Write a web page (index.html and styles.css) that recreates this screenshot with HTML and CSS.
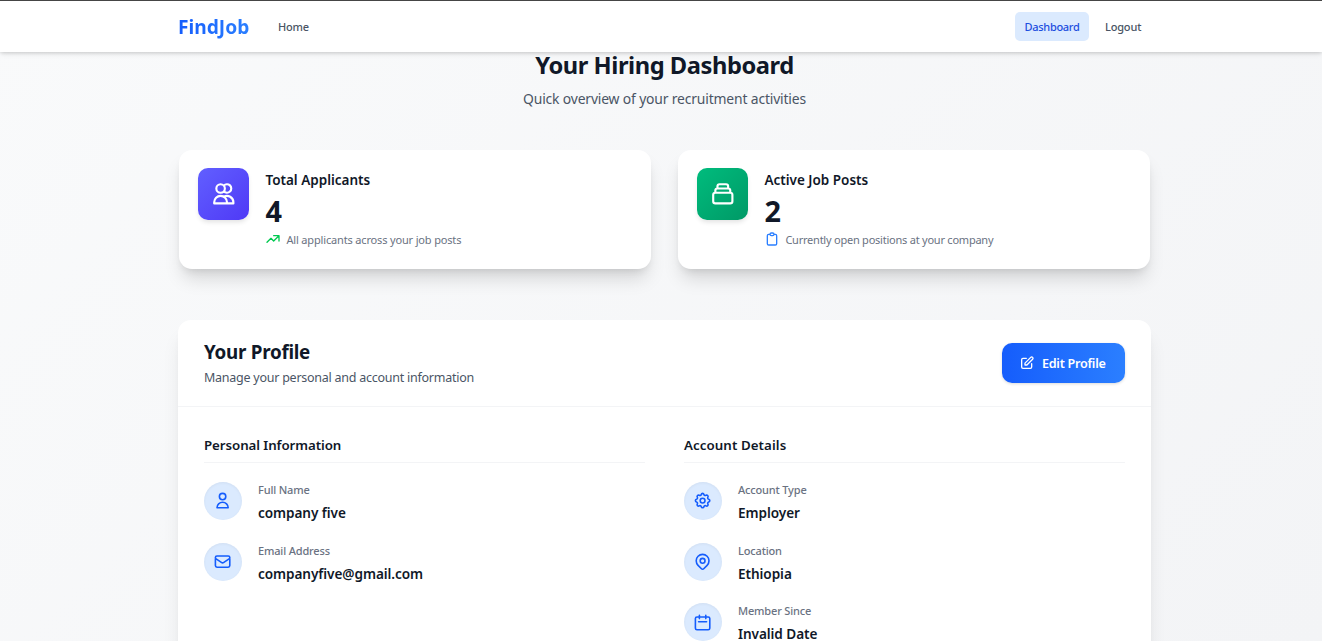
FILE: index.html
```html
<!DOCTYPE html>
<html lang="en">
<head>
<meta charset="utf-8">
<title>FindJob</title>
<link rel="stylesheet" href="styles.css">
</head>
<body>
<header class="nav">
  <div class="nav-inner">
    <a class="brand">FindJob</a>
    <a class="nav-link home">Home</a>
    <span class="grow"></span>
    <a class="nav-link active">Dashboard</a>
    <a class="nav-link logout">Logout</a>
  </div>
</header>
<main class="page">
  <div class="intro">
    <h1 class="title">Your Hiring Dashboard</h1>
    <p class="subtitle">Quick overview of your recruitment activities</p>
  </div>
  <section class="stats">
    <article class="stat">
      <div class="tile indigo"><svg class="icon-lg" viewBox="0 0 24 24"><path d="M12 4.354a4 4 0 110 5.292M15 21H3v-1a6 6 0 0112 0v1zm0 0h6v-1a6 6 0 00-9-5.197M13 7a4 4 0 11-8 0 4 4 0 018 0z"/></svg></div>
      <div class="stat-body">
        <h2 class="stat-name">Total Applicants</h2>
        <p class="stat-value">4</p>
        <p class="stat-note"><svg class="icon-sm green" viewBox="0 0 24 24"><path d="M13 7h8m0 0v8m0-8l-8 8-4-4-6 6"/></svg><span>All applicants across your job posts</span></p>
      </div>
    </article>
    <article class="stat">
      <div class="tile emerald"><svg class="icon-lg" viewBox="0 0 24 24"><path d="M19 11H5m14 0a2 2 0 012 2v6a2 2 0 01-2 2H5a2 2 0 01-2-2v-6a2 2 0 012-2m14 0V9a2 2 0 00-2-2M5 11V9a2 2 0 012-2m0 0V5a2 2 0 012-2h6a2 2 0 012 2v2M7 7h10"/></svg></div>
      <div class="stat-body">
        <h2 class="stat-name">Active Job Posts</h2>
        <p class="stat-value">2</p>
        <p class="stat-note tight"><svg class="icon-sm blue" viewBox="0 0 24 24"><path d="M9 5H7a2 2 0 00-2 2v12a2 2 0 002 2h10a2 2 0 002-2V7a2 2 0 00-2-2h-2M9 5a2 2 0 002 2h2a2 2 0 002-2M9 5a2 2 0 012-2h2a2 2 0 012 2"/></svg><span>Currently open positions at your company</span></p>
      </div>
    </article>
  </section>
  <section class="profile">
    <div class="profile-head">
      <div>
        <h2 class="profile-title">Your Profile</h2>
        <p class="profile-sub">Manage your personal and account information</p>
      </div>
      <button class="edit"><svg class="icon-sm" viewBox="0 0 24 24"><path d="M11 5H6a2 2 0 00-2 2v11a2 2 0 002 2h11a2 2 0 002-2v-5m-1.414-9.414a2 2 0 112.828 2.828L11.828 15H9v-2.828l8.586-8.586z"/></svg><span>Edit Profile</span></button>
    </div>
    <div class="columns">
      <div class="column">
        <h3 class="col-title">Personal Information</h3>
        <div class="field">
          <div class="dot"><svg class="icon-md" viewBox="0 0 24 24"><path d="M16 7a4 4 0 11-8 0 4 4 0 018 0zM12 14a7 7 0 00-7 7h14a7 7 0 00-7-7z"/></svg></div>
          <div><p class="label">Full Name</p><p class="value">company five</p></div>
        </div>
        <div class="field">
          <div class="dot"><svg class="icon-md" viewBox="0 0 24 24"><path d="M3 8l7.89 5.26a2 2 0 002.22 0L21 8M5 19h14a2 2 0 002-2V7a2 2 0 00-2-2H5a2 2 0 00-2 2v10a2 2 0 002 2z"/></svg></div>
          <div><p class="label">Email Address</p><p class="value">companyfive@gmail.com</p></div>
        </div>
      </div>
      <div class="column">
        <h3 class="col-title wide">Account Details</h3>
        <div class="field">
          <div class="dot"><svg class="icon-md" viewBox="0 0 24 24"><path d="M10.325 4.317c.426-1.756 2.924-1.756 3.35 0a1.724 1.724 0 002.573 1.066c1.543-.94 3.31.826 2.37 2.37a1.724 1.724 0 001.065 2.572c1.756.426 1.756 2.924 0 3.35a1.724 1.724 0 00-1.066 2.573c.94 1.543-.826 3.31-2.37 2.37a1.724 1.724 0 00-2.572 1.065c-.426 1.756-2.924 1.756-3.35 0a1.724 1.724 0 00-2.573-1.066c-1.543.94-3.31-.826-2.37-2.37a1.724 1.724 0 00-1.065-2.572c-1.756-.426-1.756-2.924 0-3.35a1.724 1.724 0 001.066-2.573c-.94-1.543.826-3.31 2.37-2.37.996.608 2.296.07 2.572-1.065z"/><path d="M15 12a3 3 0 11-6 0 3 3 0 016 0z"/></svg></div>
          <div><p class="label">Account Type</p><p class="value">Employer</p></div>
        </div>
        <div class="field">
          <div class="dot"><svg class="icon-md" viewBox="0 0 24 24"><path d="M17.657 16.657L13.414 20.9a1.998 1.998 0 01-2.827 0l-4.244-4.243a8 8 0 1111.314 0z"/><path d="M15 11a3 3 0 11-6 0 3 3 0 016 0z"/></svg></div>
          <div><p class="label">Location</p><p class="value">Ethiopia</p></div>
        </div>
        <div class="field last">
          <div class="dot"><svg class="icon-md" viewBox="0 0 24 24"><path d="M8 7V3m8 4V3m-9 8h10M5 21h14a2 2 0 002-2V7a2 2 0 00-2-2H5a2 2 0 00-2 2v12a2 2 0 002 2z"/></svg></div>
          <div><p class="label">Member Since</p><p class="value">Invalid Date</p></div>
        </div>
      </div>
    </div>
  </section>
</main>
</body>
</html>
```
FILE: styles.css
```css
* { box-sizing: border-box; margin: 0; padding: 0; }
body {
  height: 641px;
  overflow: hidden;
  font-family: "Segoe UI", "Noto Sans", "Open Sans", sans-serif;
  color: #101828;
  background: linear-gradient(135deg, #f9fafb, #f3f4f6);
  white-space: nowrap;
}
svg { flex: none; fill: none; stroke: currentColor; stroke-width: 2; stroke-linecap: round; stroke-linejoin: round; }
.nav {
  position: relative;
  height: 52px;
  border-top: 1px solid #454545;
  background: #fff;
  box-shadow: 0 3px 5px -1px rgba(0,0,0,.1), 0 1px 3px rgba(0,0,0,.1);
}
.nav-inner { display: flex; align-items: center; width: 973px; height: 51px; margin-left: 178px; padding-bottom: 1px; }
.brand {
  width: 71px;
  font-size: 19.2px;
  font-weight: 700;
  background: linear-gradient(90deg, #155dfc, #2b7fff);
  -webkit-background-clip: text;
  background-clip: text;
  color: transparent;
}
.nav-link { font-size: 11px; font-weight: 500; letter-spacing: -.18px; color: #4a5565; }
.home { margin-left: 29px; }
.grow { flex: 1; }
.active { width: 74px; height: 29px; line-height: 29px; text-align: center; border-radius: 5px; background: #dbeafe; letter-spacing: -.28px; color: #1d4fe0; }
.logout { width: 46px; margin-left: 16px; }
.page { width: 973px; margin-left: 178px; }
.intro { height: 98px; text-align: center; }
.title { padding-top: 1px; margin-top: -4px; font-size: 23.7px; line-height: 32px; font-weight: 700; letter-spacing: -.45px; }
.subtitle { margin-top: 8px; font-size: 13.9px; line-height: 20px; letter-spacing: -.16px; color: #4a5565; }
.stats { display: grid; grid-template-columns: 1fr 1fr; gap: 27px; padding: 4px 1px 0; }
.stat {
  display: flex;
  gap: 16px;
  height: 119px;
  padding: 18px 19px;
  border-radius: 13px;
  background: #fff;
  box-shadow: 0 13px 18px -3px rgba(0,0,0,.13), 0 5px 8px -4px rgba(0,0,0,.12);
}
.tile { display: flex; align-items: center; justify-content: center; width: 51.4px; height: 52px; flex: none; border-radius: 10px; color: #fff; box-shadow: 0 3px 5px -1px rgba(0,0,0,.12); }
.indigo { background: linear-gradient(135deg, #615fff, #4f39f6); }
.emerald { background: linear-gradient(135deg, #00bc7d, #009966); }
.icon-lg { width: 25.6px; height: 25.6px; }
.icon-md { width: 19.2px; height: 19.2px; }
.icon-sm { width: 16px; height: 16px; }
.stat-name { margin-top: 2px; font-size: 13.5px; line-height: 20px; font-weight: 600; }
.stat-value { margin-top: 3px; font-size: 28.8px; line-height: 36px; font-weight: 700; }
.stat-note { display: flex; align-items: center; gap: 5px; margin-top: 2px; height: 16px; font-size: 11px; letter-spacing: -.16px; color: #6a7282; }
.tight { letter-spacing: -.23px; }
.green { color: #00c950; }
.blue { color: #2b7fff; }
.profile {
  height: 380px;
  margin-top: 51px;
  border-radius: 13px;
  background: #fff;
  box-shadow: 0 16px 20px -4px rgba(0,0,0,.1), 0 6px 8px -5px rgba(0,0,0,.1);
}
.profile-head { display: flex; align-items: center; justify-content: space-between; height: 87px; padding: 0 26px; border-bottom: 1px solid #f3f4f6; }
.profile-title { font-size: 18.8px; line-height: 26px; font-weight: 700; letter-spacing: -.26px; }
.profile-sub { margin-top: 2px; padding-top: 1px; font-size: 12.5px; line-height: 20px; letter-spacing: -.25px; color: #4a5565; }
.edit {
  display: flex;
  align-items: center;
  gap: 7px;
  width: 123px;
  height: 40px;
  padding-left: 17px;
  border: 0;
  border-radius: 10px;
  background: linear-gradient(90deg, #155dfc, #2b7fff);
  box-shadow: 0 1px 3px rgba(0,0,0,.15);
  color: #fff;
  font: 600 12.6px "Segoe UI", "Noto Sans", "Open Sans", sans-serif;
  letter-spacing: -.27px;
}
.columns { display: grid; grid-template-columns: 1fr 1fr; gap: 39px; padding: 28px 26px 0; }
.col-title { height: 28px; margin-bottom: 19px; border-bottom: 1px solid #f3f4f6; font-size: 13.3px; line-height: 20px; font-weight: 600; letter-spacing: -.07px; }
.wide { letter-spacing: .08px; }
.field { display: flex; gap: 16px; height: 60.6px; }
.dot { display: flex; align-items: center; justify-content: center; flex: none; width: 38px; height: 38px; border-radius: 50%; background: #dbeafe; color: #155dfc; box-shadow: inset 0 1px 3px rgba(0,0,0,.05); }
.label { font-size: 11px; line-height: 16px; font-weight: 500; letter-spacing: -.16px; color: #6a7282; }
.value { margin-top: 5px; font-size: 13.6px; line-height: 20px; font-weight: 600; letter-spacing: -.07px; }
```
